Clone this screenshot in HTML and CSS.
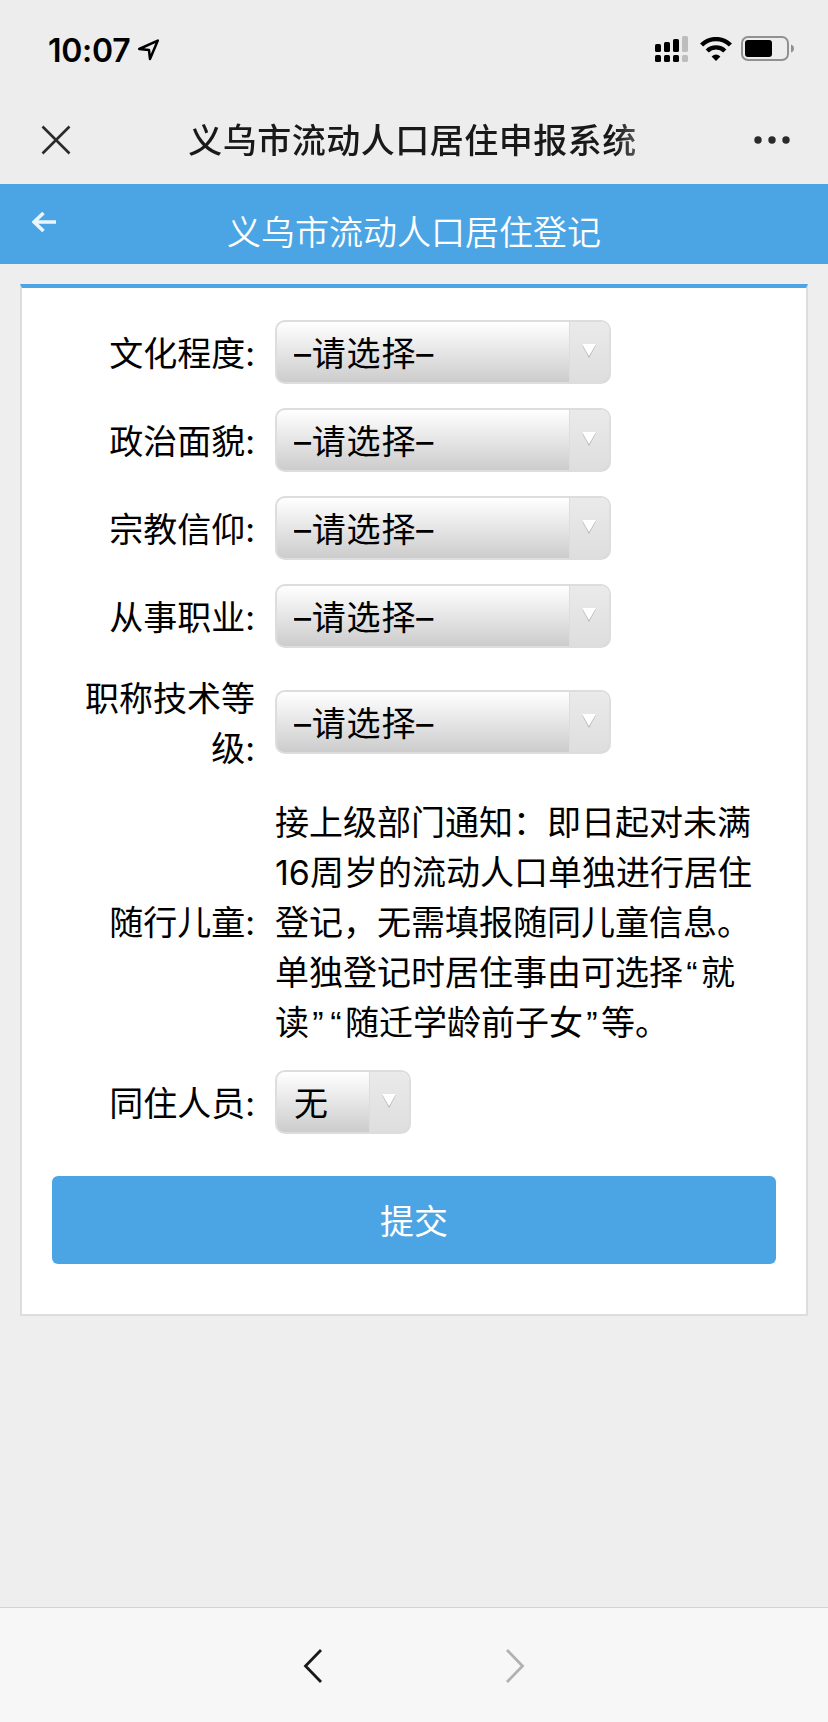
FILE: index.html
```html
<!DOCTYPE html>
<html lang="zh-CN">
<head>
  <meta charset="UTF-8">
  <meta name="viewport" content="width=device-width, initial-scale=1.0">
  <title>义乌市流动人口居住申报系统</title>
  <link rel="stylesheet" href="styles.css">
</head>
<body>
  <div class="status-bar">
    <span class="time">10:07</span>
    <svg class="icon-location" width="24" height="24" viewBox="0 0 24 24">
      <path d="M2.200 11 L20.800 2.600 L13 21 L12 12 Z" fill="none" stroke="#000" stroke-width="2.500" stroke-linejoin="round"/>
    </svg>
    <svg class="icon-signal" width="34" height="26" viewBox="0 0 34 26">
      <rect x="0" y="8" width="6" height="8" rx="1.6"/>
      <rect x="9" y="6" width="6" height="10" rx="1.6"/>
      <rect x="18" y="3" width="6" height="13" rx="1.6"/>
      <rect x="27" y="0" width="6" height="16" rx="1.6" fill="#bdbdbd"/>
      <rect x="0" y="19" width="6" height="7" rx="1.6"/>
      <rect x="9" y="19" width="6" height="7" rx="1.6"/>
      <rect x="18" y="19" width="6" height="7" rx="1.6"/>
      <rect x="27" y="19" width="6" height="7" rx="1.6" fill="#bdbdbd"/>
    </svg>
    <svg class="icon-wifi" width="32" height="24" viewBox="0 0 32 24">
      <path d="M1.600 8 A20.500 20.500 0 0 1 30.400 8" fill="none" stroke="#000" stroke-width="4.400"/>
      <path d="M7.200 14 A12.600 12.600 0 0 1 24.800 14" fill="none" stroke="#000" stroke-width="4.400"/>
      <path d="M11.600 19.500 Q16 15.500 20.400 19.500 L16 24 Z"/>
    </svg>
    <svg class="icon-battery" width="54" height="26" viewBox="0 0 54 26">
      <rect x="1" y="1" width="46" height="23" rx="6" fill="none" stroke="#919191" stroke-width="2"/>
      <rect x="4" y="4" width="27" height="17" rx="3"/>
      <path d="M50 8.500 Q53 9.500 53 12.500 Q53 15.500 50 16.500 Z" fill="#919191"/>
    </svg>
  </div>

  <div class="nav-bar">
    <svg class="icon-close" width="30" height="30" viewBox="0 0 30 30">
      <path d="M1.500 1.500 L28.500 28.500 M28.500 1.500 L1.500 28.500" fill="none" stroke="#2a2a2a" stroke-width="2.600"/>
    </svg>
    <h1>义乌市流动人口居住申报系统</h1>
    <svg class="icon-more" width="36" height="8" viewBox="0 0 36 8">
      <circle cx="4" cy="4" r="3.700"/>
      <circle cx="18" cy="4" r="3.700"/>
      <circle cx="32" cy="4" r="3.700"/>
    </svg>
  </div>

  <div class="header">
    <svg class="icon-back" width="24" height="20" viewBox="0 0 24 20">
      <path d="M11.500 1 L2 10 L11.500 19 M2 10 L24 10" fill="none" stroke="#e9f6ff" stroke-width="3.600"/>
    </svg>
    <h2>义乌市流动人口居住登记</h2>
  </div>

  <div class="content">
    <form class="form-box">
      <div class="form-group">
        <label for="education">文化程度:</label>
        <div class="select-box">
          <select id="education"><option>–请选择–</option></select>
          <span class="arrow"><svg width="14" height="14" viewBox="0 0 14 14"><path d="M0 1 L14 1 L7 14 Z" fill="#b4b4b4"/><path d="M0 0 L14 0 L7 12.200 Z" fill="#fff"/></svg></span>
        </div>
      </div>
      <div class="form-group">
        <label for="politics">政治面貌:</label>
        <div class="select-box">
          <select id="politics"><option>–请选择–</option></select>
          <span class="arrow"><svg width="14" height="14" viewBox="0 0 14 14"><path d="M0 1 L14 1 L7 14 Z" fill="#b4b4b4"/><path d="M0 0 L14 0 L7 12.200 Z" fill="#fff"/></svg></span>
        </div>
      </div>
      <div class="form-group">
        <label for="religion">宗教信仰:</label>
        <div class="select-box">
          <select id="religion"><option>–请选择–</option></select>
          <span class="arrow"><svg width="14" height="14" viewBox="0 0 14 14"><path d="M0 1 L14 1 L7 14 Z" fill="#b4b4b4"/><path d="M0 0 L14 0 L7 12.200 Z" fill="#fff"/></svg></span>
        </div>
      </div>
      <div class="form-group">
        <label for="job">从事职业:</label>
        <div class="select-box">
          <select id="job"><option>–请选择–</option></select>
          <span class="arrow"><svg width="14" height="14" viewBox="0 0 14 14"><path d="M0 1 L14 1 L7 14 Z" fill="#b4b4b4"/><path d="M0 0 L14 0 L7 12.200 Z" fill="#fff"/></svg></span>
        </div>
      </div>
      <div class="form-group">
        <label for="level">职称技术等级:</label>
        <div class="select-box">
          <select id="level"><option>–请选择–</option></select>
          <span class="arrow"><svg width="14" height="14" viewBox="0 0 14 14"><path d="M0 1 L14 1 L7 14 Z" fill="#b4b4b4"/><path d="M0 0 L14 0 L7 12.200 Z" fill="#fff"/></svg></span>
        </div>
      </div>
      <div class="form-group">
        <label>随行儿童:</label>
        <p class="notice">接上级部门通知：即日起对未满<br>16周岁的流动人口单独进行居住<br>登记，无需填报随同儿童信息。<br>单独登记时居住事由可选择<span class="quote">“</span>就<br>读<span class="quote">”</span><span class="quote">“</span>随迁学龄前子女<span class="quote">”</span>等。</p>
      </div>
      <div class="form-group">
        <label for="together">同住人员:</label>
        <div class="select-box select-small">
          <select id="together"><option>无</option></select>
          <span class="arrow"><svg width="14" height="14" viewBox="0 0 14 14"><path d="M0 1 L14 1 L7 14 Z" fill="#b4b4b4"/><path d="M0 0 L14 0 L7 12.200 Z" fill="#fff"/></svg></span>
        </div>
      </div>
      <button type="button" class="btn-submit">提交</button>
    </form>
  </div>

  <div class="tool-bar">
    <svg width="20" height="36" viewBox="0 0 20 36">
      <path d="M18 2 L2.500 18 L18 34" fill="none" stroke="#191919" stroke-width="2.800"/>
    </svg>
    <svg width="20" height="36" viewBox="0 0 20 36">
      <path d="M2 2 L17.500 18 L2 34" fill="none" stroke="#b2b2b2" stroke-width="2.800"/>
    </svg>
  </div>
</body>
</html>
```
FILE: styles.css
```css
html, body {
  height: 100%;
  margin: 0;
  padding: 0;
}
body {
  display: flex;
  flex-direction: column;
  font-family: Inter, "Noto Sans CJK SC", sans-serif;
  font-size: 34px;
  font-weight: 390;
  line-height: 50px;
  color: #000;
  background-color: #eee;
}
svg {
  display: block;
  flex: none;
}
h1, h2, p {
  margin: 0;
}
.status-bar {
  display: flex;
  align-items: center;
  height: 98px;
  padding: 2px 33px 0 48px;
  box-sizing: border-box;
  background-color: #ededed;
}
.time {
  padding-top: 1px;
  font-size: 32px;
  font-weight: 600;
  letter-spacing: -0.3px;
}
.icon-location {
  margin-left: 7px;
}
.icon-signal {
  margin: -2px 0 0 auto;
}
.icon-wifi {
  margin: -2px 0 0 11px;
}
.icon-battery {
  margin: -2px 0 0 9px;
}
.nav-bar {
  display: flex;
  align-items: center;
  justify-content: space-between;
  height: 86px;
  padding: 0 38px 2px 41px;
  box-sizing: border-box;
  background-color: #ededed;
}
.nav-bar h1 {
  padding-top: 2px;
  font-size: 34px;
  font-weight: 500;
  letter-spacing: 0.5px;
  color: #191919;
  mask-image: linear-gradient(90deg, #000 calc(100% - 22px), rgba(0,0,0,0.7));
}
.icon-more {
  fill: #2a2a2a;
}
.header {
  display: flex;
  height: 80px;
  padding: 0 32px;
  box-sizing: border-box;
  background-color: #4ba5e5;
}
.icon-back {
  margin-top: 28px;
}
.header h2 {
  flex: 1;
  margin: 24px 24px 0 0;
  font-size: 34px;
  font-weight: 350;
  text-align: center;
  color: #fff;
}
.content {
  flex: 1;
  padding: 20px;
}
.form-box {
  padding: 20px 30px 50px;
  background-color: #fff;
  border: 2px solid #ddd;
  border-top: 4px solid #4ba5e5;
}
.form-group {
  display: flex;
  align-items: center;
  padding: 12px 0;
}
.form-group label {
  width: 180px;
  margin: 2px 20px -2px 23px;
  text-align: right;
}
.select-box {
  display: flex;
  width: 336px;
  height: 64px;
  box-sizing: border-box;
  border: 2px solid #ddd;
  border-radius: 10px;
  overflow: hidden;
  background: linear-gradient(#fff, #ccc);
}
.select-small {
  width: 136px;
}
.select-box select {
  flex: 1;
  min-width: 0;
  padding: 4px 0 0 17px;
  border: none;
  outline: none;
  appearance: none;
  background: none;
  font: inherit;
  letter-spacing: 0.8px;
  color: #000;
}
.arrow {
  width: 40px;
  padding: 22px 0 0 12px;
  box-sizing: border-box;
  border-left: 1px solid #ddd;
  background: linear-gradient(#eaeaea, #dedede);
}
.notice {
  margin: 2px 0 -2px;
  white-space: nowrap;
}
.quote {
  display: inline-block;
  width: 18px;
  line-height: 34px;
  font-family: "Liberation Sans", Arial, sans-serif;
  text-align: center;
}
.btn-submit {
  display: block;
  width: 100%;
  height: 88px;
  margin-top: 30px;
  padding: 4px 0 0;
  border: none;
  border-radius: 6px;
  font: inherit;
  color: #fff;
  background-color: #4ba5e5;
}
.tool-bar {
  display: flex;
  justify-content: center;
  align-items: center;
  gap: 182px;
  height: 115px;
  padding-top: 2px;
  box-sizing: border-box;
  border-top: 1px solid #d3d3d3;
  background-color: #f7f7f7;
}
```
